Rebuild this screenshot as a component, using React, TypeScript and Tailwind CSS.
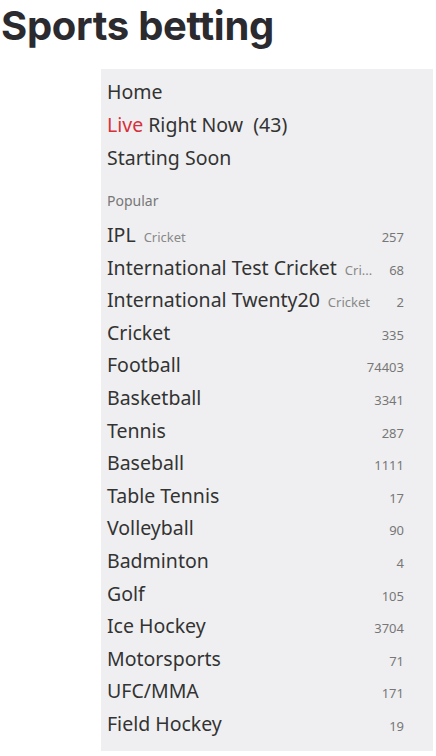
import React from 'react';

const sports: { name: string; tag?: string; count: number }[] = [
  { name: 'IPL', tag: 'Cricket', count: 257 },
  { name: 'International Test Cricket', tag: 'Cri...', count: 68 },
  { name: 'International Twenty20', tag: 'Cricket', count: 2 },
  { name: 'Cricket', count: 335 },
  { name: 'Football', count: 74403 },
  { name: 'Basketball', count: 3341 },
  { name: 'Tennis', count: 287 },
  { name: 'Baseball', count: 1111 },
  { name: 'Table Tennis', count: 17 },
  { name: 'Volleyball', count: 90 },
  { name: 'Badminton', count: 4 },
  { name: 'Golf', count: 105 },
  { name: 'Ice Hockey', count: 3704 },
  { name: 'Motorsports', count: 71 },
  { name: 'UFC/MMA', count: 171 },
  { name: 'Field Hockey', count: 19 },
];

const App: React.FC = () => {
  return (
    <div className="w-[436px] h-[756px] bg-white overflow-hidden">
      <h1 className="pt-[3px] pl-px font-['Inter',sans-serif] font-bold text-[40px] leading-[46px] text-[#2b2b2f] tracking-[-0.3px]">
        Sports betting
      </h1>

      <div className="ml-[101px] mt-[20px] w-[332px] h-[682px] bg-[#efeff1] pl-[6px] pr-[29px] pt-[6px] font-['Noto_Sans','Open_Sans',sans-serif] text-[#333]">
        <div className="flex flex-col text-[19.5px] leading-[33px]">
          <span>Home</span>
          <span>
            <span className="text-[#d8303a]">Live</span> Right Now&nbsp; (43)
          </span>
          <span>Starting Soon</span>
        </div>

        <div className="mt-[15px] text-[14px] leading-[24px] text-[#777]">Popular</div>

        <ul className="mt-[6px] flex flex-col">
          {sports.map((s) => (
            <li key={s.name} className="flex items-baseline h-[32.6px] leading-[32px]">
              <span className="text-[19.5px] whitespace-nowrap">{s.name}</span>
              {s.tag && <span className="ml-[8px] text-[13px] text-[#888] whitespace-nowrap">{s.tag}</span>}
              <span className="ml-auto pl-2 text-[13px] text-[#777]">{s.count}</span>
            </li>
          ))}
        </ul>
      </div>
    </div>
  );
};

export default App;
